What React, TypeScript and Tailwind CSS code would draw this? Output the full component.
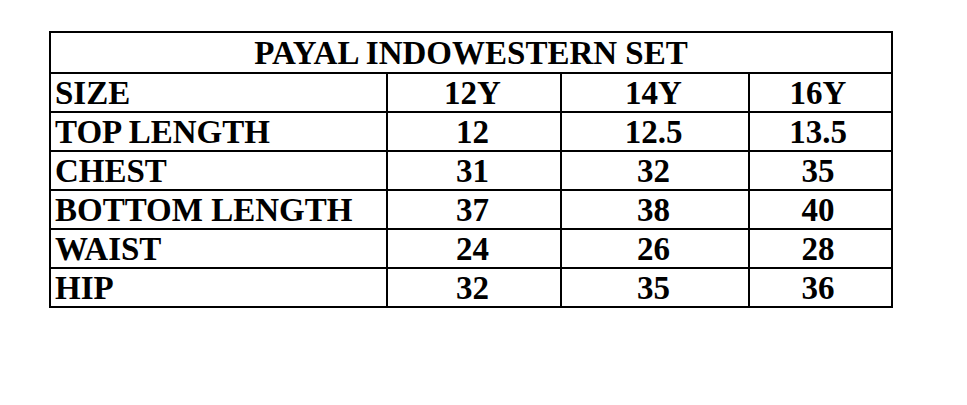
const rows: [string, string, string, string][] = [
  ['SIZE', '12Y', '14Y', '16Y'],
  ['TOP LENGTH', '12', '12.5', '13.5'],
  ['CHEST', '31', '32', '35'],
  ['BOTTOM LENGTH', '37', '38', '40'],
  ['WAIST', '24', '26', '28'],
  ['HIP', '32', '35', '36'],
]

export default function App() {
  return (
    <div
      className="min-h-screen w-full bg-white text-black pt-[31px] pl-[49px]"
      style={{ fontFamily: '"Liberation Serif", "Times New Roman", serif' }}
    >
      {/* size chart: black background + gap makes the grid lines */}
      <div className="grid w-[844px] grid-cols-[335px_172px_186px_141px] gap-[2px] bg-black p-[2px] font-bold text-[33px]">
        <div className="col-span-4 h-[39px] bg-white pt-[2px] text-center leading-[37px]">
          PAYAL INDOWESTERN SET
        </div>
        {rows.map((r) => (
          <div key={r[0]} className="contents">
            <div className="h-[37px] overflow-hidden bg-white pl-[4px] pt-px leading-[37px]">{r[0]}</div>
            <div className="h-[37px] overflow-hidden bg-white pr-[3px] pt-px text-center leading-[37px]">{r[1]}</div>
            <div className="h-[37px] overflow-hidden bg-white pr-[3px] pt-px text-center leading-[37px]">{r[2]}</div>
            <div className="h-[37px] overflow-hidden bg-white pr-[5px] pt-px text-center leading-[37px]">{r[3]}</div>
          </div>
        ))}
      </div>
    </div>
  )
}
